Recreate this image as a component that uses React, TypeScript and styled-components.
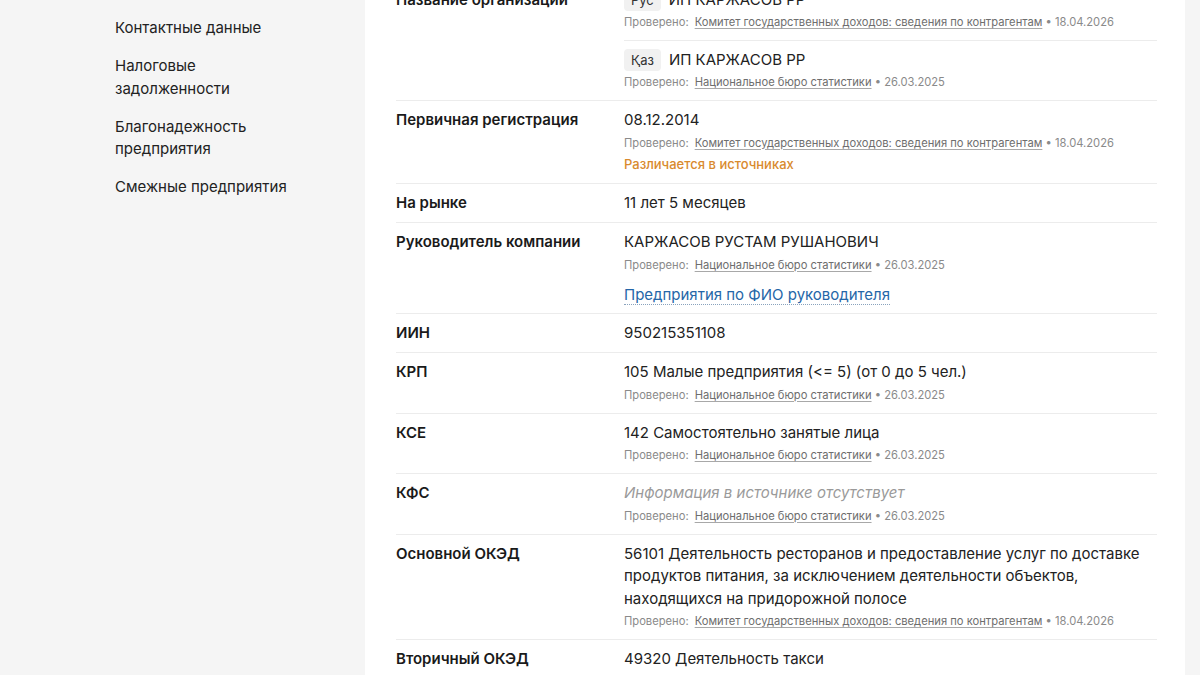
import React from "react";
import styled, { createGlobalStyle } from "styled-components";

const GlobalStyle = createGlobalStyle`
  html, body {
    margin: 0;
    padding: 0;
    background: #f5f5f5;
    font-family: Inter, "Noto Sans", "Liberation Sans", sans-serif;
    color: #1f1f1f;
    -webkit-font-smoothing: antialiased;
  }
`;

const Page = styled.div`
  display: grid;
  grid-template-columns: 365px 820px 1fr;
  min-height: 675px;
  overflow: hidden;
`;

const Sidebar = styled.nav`
  display: flex;
  flex-direction: column;
  gap: 15.5px;
  padding: 17px 0 0 115px;
`;

const NavItem = styled.a`
  display: block;
  width: 190px;
  font-size: 15px;
  line-height: 22.5px;
  color: #222;
  text-decoration: none;
`;

const Card = styled.section`
  background: #fff;
  padding: 0 28px 0 31px;
  margin-top: -19px;
`;

const Row = styled.div`
  display: grid;
  grid-template-columns: 228px 1fr;
  padding: 8px 0;
  border-bottom: 1px solid #ececec;
`;

const Label = styled.div`
  font-size: 15px;
  line-height: 22px;
  font-weight: 600;
  color: #1a1a1a;
`;

const Value = styled.div`
  display: flex;
  flex-direction: column;
  min-width: 0;
`;

const Text = styled.div<{ $muted?: boolean }>`
  font-size: 15px;
  line-height: 22.5px;
  color: ${(p) => (p.$muted ? "#9a9a9a" : "#222")};
  font-style: ${(p) => (p.$muted ? "italic" : "normal")};
`;

const Variant = styled.div<{ $first?: boolean }>`
  display: flex;
  flex-direction: column;
  padding: ${(p) => (p.$first ? "0 0 8px" : "8px 0 0")};
  border-bottom: ${(p) => (p.$first ? "1px solid #ececec" : "none")};
`;

const TitleLine = styled.div`
  display: flex;
  align-items: center;
  gap: 8px;
  height: 22px;
`;

const LangBadge = styled.span`
  display: inline-flex;
  align-items: center;
  height: 22px;
  padding: 0 7px;
  border-radius: 4px;
  background: #f1f1f1;
  font-size: 13px;
  color: #333;
`;

const Meta = styled.div`
  margin-top: 1px;
  font-size: 11.2px;
  line-height: 20px;
  color: #8a8a8a;
  white-space: nowrap;
`;

const Source = styled.a`
  margin-left: 6px;
  color: #6e6e6e;
  text-decoration: underline;
  text-underline-offset: 2px;
  text-decoration-color: #a8a8a8;
`;

const Warning = styled.div`
  font-size: 13px;
  line-height: 22px;
  font-weight: 500;
  color: #d98a2e;
`;

const PersonLink = styled.a`
  align-self: flex-start;
  margin-top: 11px;
  font-size: 15px;
  line-height: 18px;
  color: #2566a8;
  text-decoration: none;
  border-bottom: 1px dotted #8aa3bd;
`;

type Check = { source: string; date: string };

const STAT: Check = { source: "Национальное бюро статистики", date: "26.03.2025" };
const KGD: Check = {
  source: "Комитет государственных доходов: сведения по контрагентам",
  date: "18.04.2026",
};

const Checked = ({ check }: { check: Check }) => (
  <Meta>
    Проверено:
    <Source href="#">{check.source}</Source> • {check.date}
  </Meta>
);

const navItems = [
  "Контактные данные",
  "Налоговые задолженности",
  "Благонадежность предприятия",
  "Смежные предприятия",
];

export default function App() {
  return (
    <>
      <GlobalStyle />
      <Page>
        <Sidebar>
          {navItems.map((item) => (
            <NavItem key={item} href="#">
              {item}
            </NavItem>
          ))}
        </Sidebar>

        <Card>
          <Row>
            <Label>Название организации</Label>
            <Value>
              <Variant $first>
                <TitleLine>
                  <LangBadge>Рус</LangBadge>
                  <Text>ИП КАРЖАСОВ РР</Text>
                </TitleLine>
                <Checked check={KGD} />
              </Variant>
              <Variant>
                <TitleLine>
                  <LangBadge>Қаз</LangBadge>
                  <Text>ИП КАРЖАСОВ РР</Text>
                </TitleLine>
                <Checked check={STAT} />
              </Variant>
            </Value>
          </Row>

          <Row>
            <Label>Первичная регистрация</Label>
            <Value>
              <Text>08.12.2014</Text>
              <Checked check={KGD} />
              <Warning>Различается в источниках</Warning>
            </Value>
          </Row>

          <Row>
            <Label>На рынке</Label>
            <Value>
              <Text>11 лет 5 месяцев</Text>
            </Value>
          </Row>

          <Row>
            <Label>Руководитель компании</Label>
            <Value>
              <Text>КАРЖАСОВ РУСТАМ РУШАНОВИЧ</Text>
              <Checked check={STAT} />
              <PersonLink href="#">Предприятия по ФИО руководителя</PersonLink>
            </Value>
          </Row>

          <Row>
            <Label>ИИН</Label>
            <Value>
              <Text>950215351108</Text>
            </Value>
          </Row>

          <Row>
            <Label>КРП</Label>
            <Value>
              <Text>105 Малые предприятия (&lt;= 5) (от 0 до 5 чел.)</Text>
              <Checked check={STAT} />
            </Value>
          </Row>

          <Row>
            <Label>КСЕ</Label>
            <Value>
              <Text>142 Самостоятельно занятые лица</Text>
              <Checked check={STAT} />
            </Value>
          </Row>

          <Row>
            <Label>КФС</Label>
            <Value>
              <Text $muted>Информация в источнике отсутствует</Text>
              <Checked check={STAT} />
            </Value>
          </Row>

          <Row>
            <Label>Основной ОКЭД</Label>
            <Value>
              <Text>
                56101 Деятельность ресторанов и предоставление услуг по доставке
                продуктов питания, за исключением деятельности объектов,
                находящихся на придорожной полосе
              </Text>
              <Checked check={KGD} />
            </Value>
          </Row>

          <Row>
            <Label>Вторичный ОКЭД</Label>
            <Value>
              <Text>49320 Деятельность такси</Text>
            </Value>
          </Row>
        </Card>
        <div />
      </Page>
    </>
  );
}
